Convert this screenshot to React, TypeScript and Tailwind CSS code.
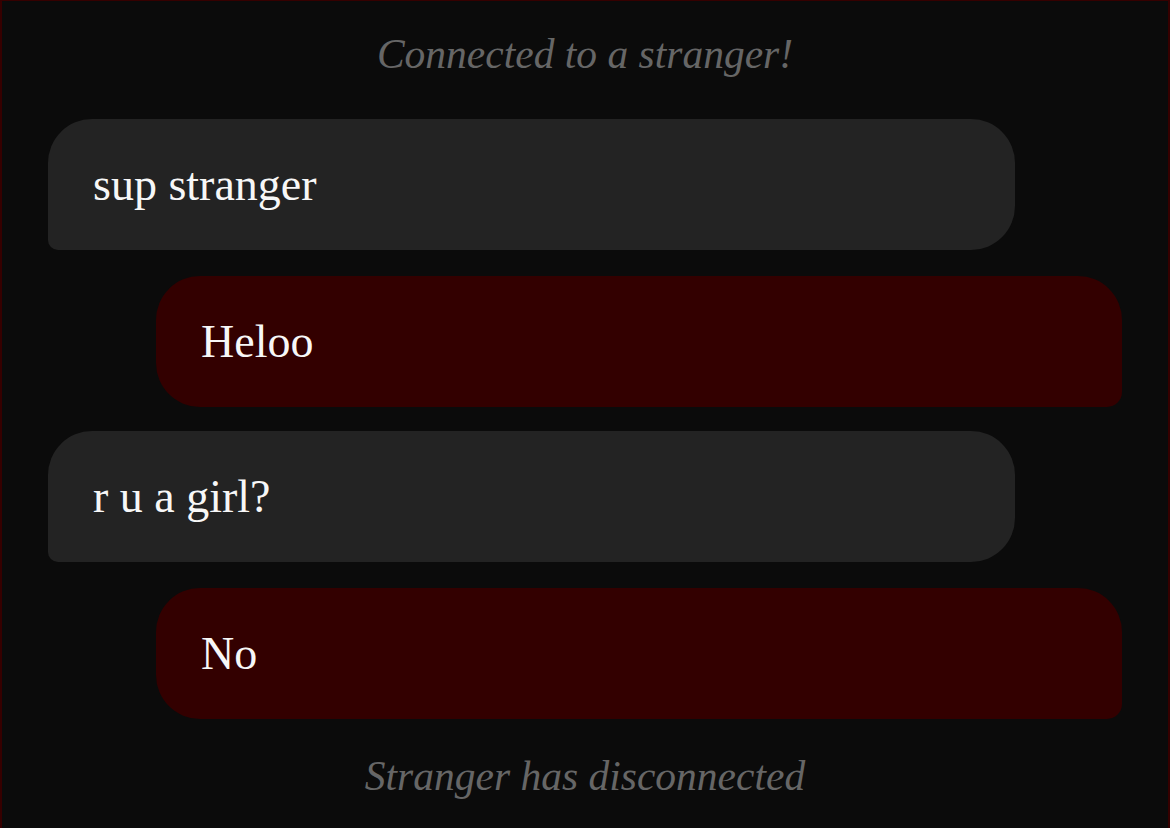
import React from "react";

type Msg = { from: "stranger" | "you"; text: string; gap: string };

const messages: Msg[] = [
  { from: "stranger", text: "sup stranger", gap: "mt-0" },
  { from: "you", text: "Heloo", gap: "mt-[26px]" },
  { from: "stranger", text: "r u a girl?", gap: "mt-[24px]" },
  { from: "you", text: "No", gap: "mt-[26px]" },
];

const serif = { fontFamily: '"Liberation Serif", "Times New Roman", serif' };

export default function App() {
  return (
    <div
      className="w-[1170px] h-[828px] bg-[#0b0b0b] border-l-2 border-r-2 border-t border-[#360000] overflow-hidden"
      style={serif}
    >
      <div className="pt-[32px] text-center text-[41.5px] leading-[42px] italic text-[#666666]">
        Connected to a stranger!
      </div>
      <div className="mt-[44px] px-[46px] flex flex-col">
        {messages.map((m, i) =>
          m.from === "stranger" ? (
            <div key={i} className={`flex justify-start ${m.gap}`}>
              <div className="w-[967px] h-[131px] bg-[#232323] rounded-[44px] rounded-bl-[10px] pl-[45px] pt-[43px] text-[46px] leading-[45px] text-[#f7f7f7]">
                {m.text}
              </div>
            </div>
          ) : (
            <div key={i} className={`flex justify-end ${m.gap}`}>
              <div className="w-[966px] h-[131px] bg-[#330000] rounded-[44px] rounded-br-[15px] pl-[45px] pt-[43px] text-[46px] leading-[45px] text-[#f7f7f7]">
                {m.text}
              </div>
            </div>
          )
        )}
      </div>
      <div className="mt-[36px] text-center text-[41.5px] leading-[42px] italic text-[#666666]">
        Stranger has disconnected
      </div>
    </div>
  );
}
